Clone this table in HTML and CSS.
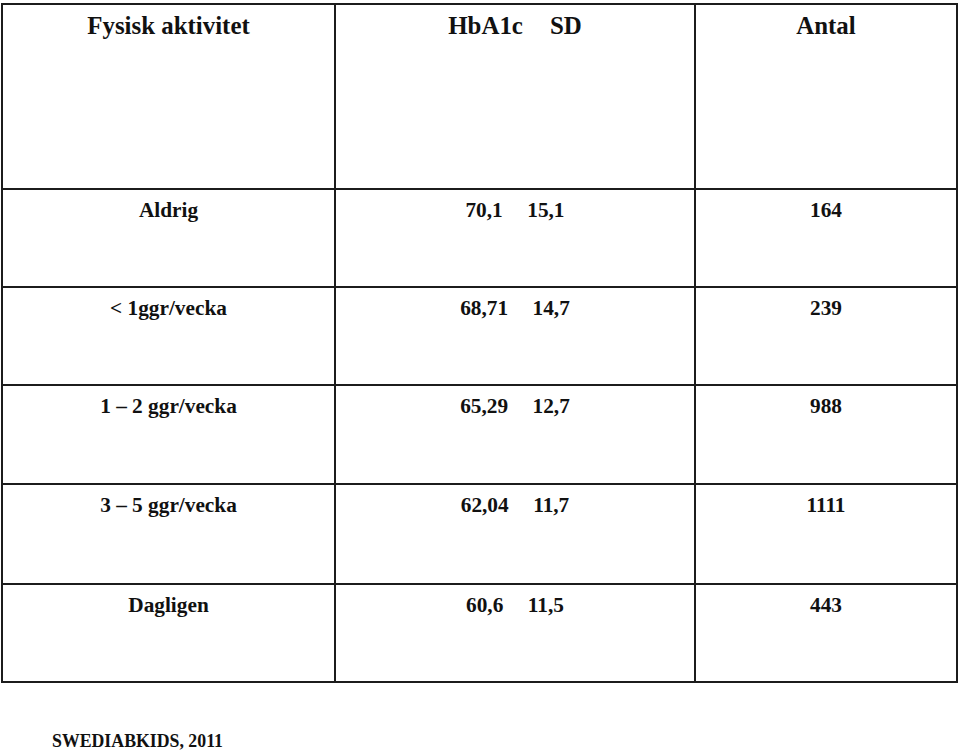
FILE: index.html
```html
<!DOCTYPE html>
<html lang="sv">
<head>
<meta charset="utf-8">
<title>Fysisk aktivitet</title>
<link rel="stylesheet" href="styles.css">
</head>
<body>
<div class="table">
  <div class="cell head">Fysisk aktivitet</div>
  <div class="cell head"><span class="pair"><span>HbA1c</span><span>SD</span></span></div>
  <div class="cell head">Antal</div>

  <div class="cell">Aldrig</div>
  <div class="cell"><span class="pair"><span>70,1</span><span>15,1</span></span></div>
  <div class="cell">164</div>

  <div class="cell">&lt; 1ggr/vecka</div>
  <div class="cell"><span class="pair"><span>68,71</span><span>14,7</span></span></div>
  <div class="cell">239</div>

  <div class="cell">1 – 2 ggr/vecka</div>
  <div class="cell"><span class="pair"><span>65,29</span><span>12,7</span></span></div>
  <div class="cell">988</div>

  <div class="cell">3 – 5 ggr/vecka</div>
  <div class="cell"><span class="pair"><span>62,04</span><span>11,7</span></span></div>
  <div class="cell">1111</div>

  <div class="cell">Dagligen</div>
  <div class="cell"><span class="pair"><span>60,6</span><span>11,5</span></span></div>
  <div class="cell">443</div>
</div>
<p class="source">SWEDIABKIDS, 2011</p>
</body>
</html>
```

FILE: styles.css
```css
html, body {
  margin: 0;
  padding: 0;
  background: #ffffff;
}

body {
  font-family: "Liberation Serif", "Times New Roman", serif;
  font-weight: bold;
  color: #111111;
}

.table {
  display: grid;
  grid-template-columns: 333px 360px 262px;
  grid-template-rows: 185px 98px 98px 99px 100px 98px;
  width: max-content;
  margin: 3px 0 0 1px;
  border-top: 2px solid #1c1c1c;
  border-left: 2px solid #1c1c1c;
}

.cell {
  box-sizing: border-box;
  border-right: 2px solid #1c1c1c;
  border-bottom: 2px solid #1c1c1c;
  padding-top: 8px;
  text-align: center;
  font-size: 21.3px;
  line-height: 1.15;
}

.cell.head {
  font-size: 24.9px;
  padding-top: 7px;
}

.pair {
  display: inline-flex;
  gap: 24.5px;
}

.head .pair {
  gap: 27px;
}

.source {
  margin: 50px 0 0 52px;
  font-size: 17.8px;
  line-height: 1;
}
```
